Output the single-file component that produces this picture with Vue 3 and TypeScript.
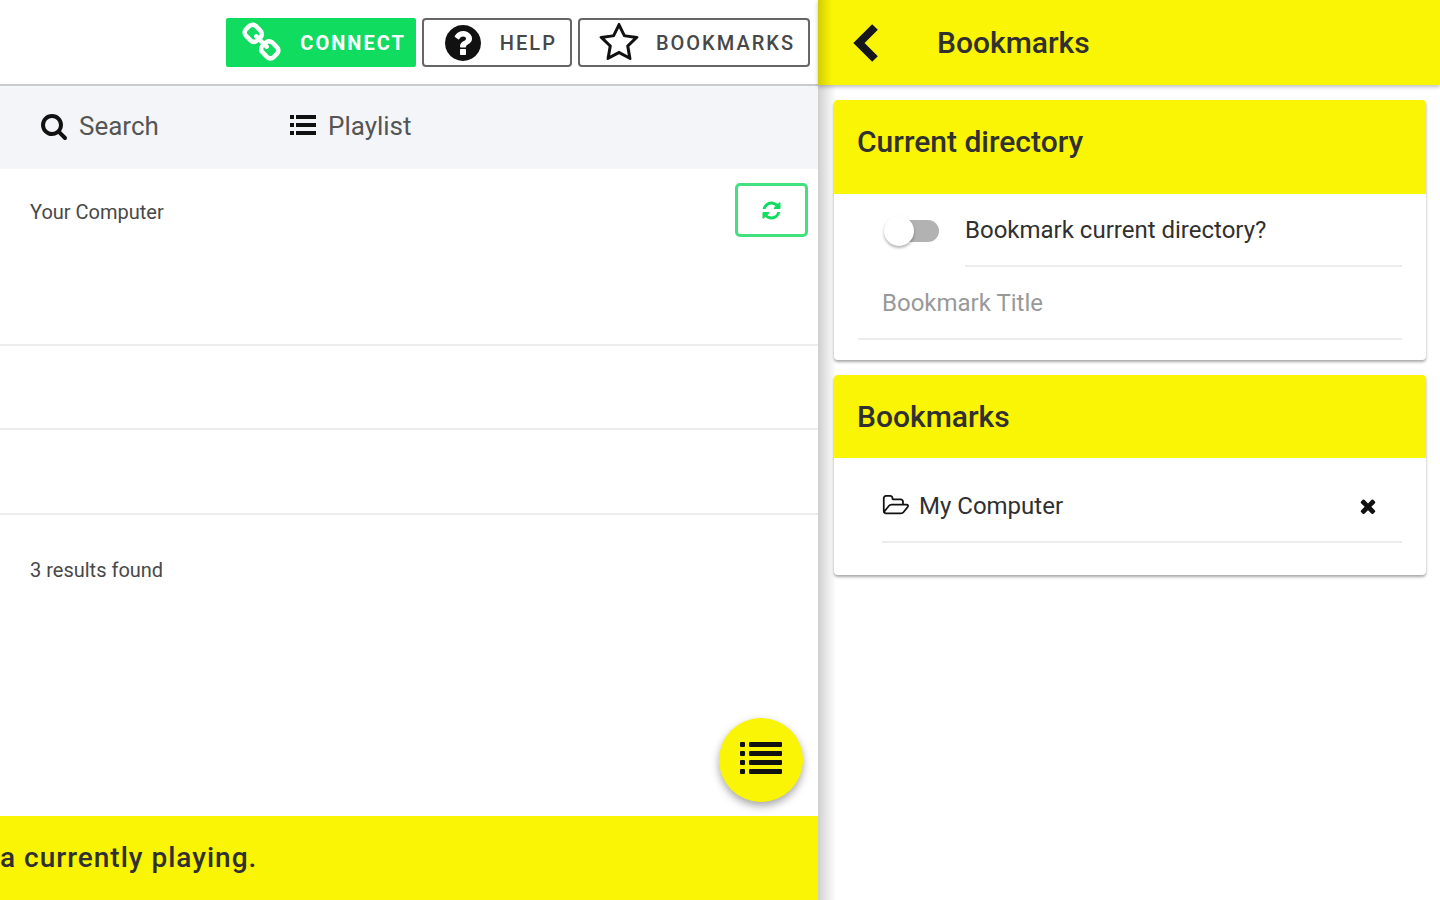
<script setup lang="ts">
import { ref } from 'vue'

const bookmarkCurrent = ref(false)
const bookmarkTitle = ref('')
const bookmarks = ref<string[]>(['My Computer'])
const drives = ['', '']

function removeBookmark(index: number): void {
  bookmarks.value.splice(index, 1)
}
</script>

<template>
  <div class="app">
    <main class="browser">
      <header class="toolbar">
        <button type="button" class="action connect">
          <svg class="icon" viewBox="0 0 1792 1792" aria-hidden="true"><path d="M1456 1216q0-40-28-68l-208-208q-28-28-68-28-42 0-72 32 3 3 19 18.500t21.500 21.500 15 19 13 25.500 3.500 27.500q0 40-28 68t-68 28q-15 0-27.500-3.500t-25.500-13-19-15-21.500-21.500-18.500-19q-33 31-33 73 0 40 28 68l206 207q27 27 68 27 40 0 68-26l147-146q28-28 28-67zm-703-705q0-40-28-68l-206-207q-28-28-68-28-39 0-68 27l-147 146q-28 28-28 67 0 40 28 68l208 208q27 27 68 27 42 0 72-31-3-3-19-18.500t-21.500-21.500-15-19-13-25.500-3.500-27.500q0-40 28-68t68-28q15 0 27.500 3.500t25.500 13 19 15 21.500 21.500 18.500 19q33-31 33-73zm895 705q0 120-85 203l-147 146q-83 83-203 83-121 0-204-85l-206-207q-83-83-83-203 0-123 88-209l-88-88q-86 88-208 88-120 0-204-84l-208-208q-84-84-84-204t85-203l147-146q83-83 203-83 121 0 204 85l206 207q83 83 83 203 0 123-88 209l88 88q86-88 208-88 120 0 204 84l208 208q84 84 84 204z" /></svg>
          <span>Connect</span>
        </button>
        <button type="button" class="action">
          <svg class="icon" viewBox="0 0 1792 1792" aria-hidden="true"><path d="M1024 1376v-192q0-14-9-23t-23-9h-192q-14 0-23 9t-9 23v192q0 14 9 23t23 9h192q14 0 23-9t9-23zm256-672q0-88-55.500-163t-138.500-116-170-41q-243 0-371 213-15 24 8 42l132 100q7 6 19 6 16 0 25-12 53-68 86-92 34-24 86-24 48 0 85.500 26t37.500 59q0 38-20 61t-68 45q-63 28-115.500 86.500t-52.500 125.500v36q0 14 9 23t23 9h192q14 0 23-9t9-23q0-19 21.500-49.500t54.500-49.500q32-18 49-28.500t46-35 44.500-48 28-60.500 12.500-81zm384 192q0 209-103 385.500t-279.500 279.500-385.500 103-385.500-103-279.500-279.500-103-385.500 103-385.500 279.500-279.500 385.500-103 385.500 103 279.500 279.500 103 385.500z" /></svg>
          <span>Help</span>
        </button>
        <button type="button" class="action">
          <svg class="icon" viewBox="0 0 1792 1792" aria-hidden="true"><path d="M1201 1004l306-297-422-62-189-382-189 382-422 62 306 297-73 421 378-199 377 199zm527-357q0 22-26 48l-363 354 86 500q1 7 1 20 0 50-41 50-19 0-40-12l-449-236-449 236q-22 12-40 12-21 0-31.500-14.500t-10.500-35.500q0-6 2-20l86-500-364-354q-25-27-25-48 0-37 56-46l502-73 225-455q19-41 49-41t49 41l225 455 502 73q56 9 56 46z" /></svg>
          <span>Bookmarks</span>
        </button>
      </header>

      <nav class="tabs">
        <a href="#search">
          <svg class="tab-icon" viewBox="0 0 1792 1792" aria-hidden="true"><path d="M1216 832q0-185-131.500-316.500t-316.500-131.500-316.500 131.500-131.500 316.500 131.500 316.500 316.500 131.500 316.500-131.500 131.500-316.500zm512 832q0 52-38 90t-90 38q-54 0-90-38l-343-342q-179 124-399 124-143 0-273.500-55.500t-225-150-150-225-55.500-273.500 55.500-273.500 150-225 225-150 273.500-55.500 273.500 55.500 225 150 150 225 55.500 273.500q0 220-124 399l343 343q37 37 37 90z" /></svg>
          Search
        </a>
        <a href="#playlist">
          <svg class="tab-icon" viewBox="0 0 28 28" aria-hidden="true"><path d="M1 3h4v4h-4zM7 3h20v4h-20zM1 11h4v4h-4zM7 11h20v4h-20zM1 19h4v4h-4zM7 19h20v4h-20z" /></svg>
          Playlist
        </a>
      </nav>

      <section class="listing">
        <div class="location">
          <span>Your Computer</span>
          <button type="button" class="refresh" aria-label="Refresh">
            <svg viewBox="0 0 1792 1792" aria-hidden="true"><path d="M1639 1056q0 5-1 7-64 268-268 434.500t-478 166.500q-146 0-282.500-55t-243.500-157l-129 129q-19 19-45 19t-45-19-19-45v-448q0-26 19-45t45-19h448q26 0 45 19t19 45-19 45l-137 137q71 66 161 102t187 36q134 0 250-65t186-179q11-17 53-117 8-23 30-23h192q13 0 22.500 9.500t9.500 22.500zm25-800v448q0 26-19 45t-45 19h-448q-26 0-45-19t-19-45 19-45l138-138q-148-137-349-137-134 0-250 65t-186 179q-11 17-53 117-8 23-30 23h-199q-13 0-22.500-9.500t-9.500-22.500v-7q65-268 270-434.500t480-166.500q146 0 284 55.500t245 156.500l130-129q19-19 45-19t45 19 19 45z" /></svg>
          </button>
        </div>
        <div v-for="(drive, i) in drives" :key="i" class="row">{{ drive }}</div>
        <p class="results">3 results found</p>
        <button type="button" class="fab" aria-label="Show queue">
          <svg viewBox="0 0 44 36" aria-hidden="true"><path d="M2 1h3v3h-3zM11 1h31v3h-31zM2 10h3v3h-3zM11 10h31v3h-31zM2 19h3v3h-3zM11 19h31v3h-31zM2 28h3v3h-3zM11 28h31v3h-31z" /></svg>
        </button>
      </section>

      <footer class="player">a currently playing.</footer>
    </main>

    <aside class="panel">
      <header class="panel-bar">
        <button type="button" class="back" aria-label="Back">
          <svg viewBox="0 0 28 38" aria-hidden="true"><path d="M22 3L6 19l16 16" /></svg>
        </button>
        <h1>Bookmarks</h1>
      </header>

      <section class="card">
        <h2 class="tall">Current directory</h2>
        <div class="toggle-row">
          <input id="bookmark-current" v-model="bookmarkCurrent" type="checkbox" role="switch" />
          <label for="bookmark-current">Bookmark current directory?</label>
        </div>
        <input v-model="bookmarkTitle" class="title-input" type="text" placeholder="Bookmark Title" aria-label="Bookmark Title" />
      </section>

      <section class="card">
        <h2>Bookmarks</h2>
        <ul>
          <li v-for="(name, i) in bookmarks" :key="name">
            <a href="#bookmark">
              <svg viewBox="0 0 2048 1792" aria-hidden="true"><path d="M1845 931q0-35-53-35h-1088q-40 0-85.500 21.500t-71.500 52.500l-294 363q-18 24-18 40 0 35 53 35h1088q40 0 86-22t71-53l294-363q18-22 18-39zm-1141-163h768v-160q0-40-28-68t-68-28h-576q-40 0-68-28t-28-68v-64q0-40-28-68t-68-28h-320q-40 0-68 28t-28 68v853l256-315q44-53 116-87.500t140-34.500zm1269 163q0 62-46 120l-295 363q-43 53-116 87.500t-140 34.500h-1088q-92 0-158-66t-66-158v-960q0-92 66-158t158-66h320q92 0 158 66t66 158v32h544q92 0 158 66t66 158v160h192q54 0 99 24.500t67 70.500q15 32 15 68z" /></svg>
              {{ name }}
            </a>
            <button type="button" class="remove" aria-label="Remove bookmark" @click="removeBookmark(i)">
              <svg viewBox="0 0 1792 1792" aria-hidden="true"><path d="M1490 1322q0 40-28 68l-136 136q-28 28-68 28t-68-28l-294-294-294 294q-28 28-68 28t-68-28l-136-136q-28-28-28-68t28-68l294-294-294-294q-28-28-28-68t28-68l136-136q28-28 68-28t68 28l294 294 294-294q28-28 68-28t68 28l136 136q28 28 28 68t-28 68l-294 294 294 294q28 28 28 68z" /></svg>
            </button>
          </li>
        </ul>
      </section>
    </aside>
  </div>
</template>

<style>
body {
  margin: 0;
  background: #fff;
}
</style>

<style scoped>
.app {
  display: grid;
  grid-template-columns: 818fr 622fr;
  min-height: 100vh;
  font-family: Roboto, "Liberation Sans", sans-serif;
  color: #303030;
}

.app *,
.app {
  box-sizing: border-box;
}

button {
  padding: 0;
  border: 0;
  background: none;
  font: inherit;
  color: inherit;
  cursor: pointer;
}

a {
  color: inherit;
  text-decoration: none;
}

svg {
  flex: none;
  fill: #111;
}

.browser {
  display: flex;
  flex-direction: column;
  min-width: 0;
}

.toolbar {
  display: flex;
  align-items: center;
  justify-content: flex-end;
  gap: 6px;
  height: 86px;
  padding: 1px 8px 0 0;
  border-bottom: 2px solid #c9cbce;
}

.action {
  display: flex;
  align-items: center;
  gap: 16px;
  height: 49px;
  padding: 0 13px 0 18px;
  border: 2px solid #666;
  border-radius: 4px;
  font-size: 20px;
  font-weight: 500;
  letter-spacing: 2px;
  text-transform: uppercase;
  color: #484848;
}

.icon {
  width: 42px;
  height: 42px;
}

.connect {
  padding: 0 10px 0 16px;
  border: 0;
  border-radius: 2px;
  background: #10dc60;
  font-weight: 700;
  color: #fff;
}

.connect .icon {
  fill: #fff;
}

.tabs {
  display: grid;
  grid-template-columns: 249px 1fr;
  align-items: center;
  height: 83px;
  padding: 0 0 3px 40px;
  background: #f4f5f9;
  font-size: 26px;
  color: #555;
}

.tabs a {
  display: flex;
  align-items: center;
  gap: 11px;
}

.tab-icon {
  width: 28px;
  height: 28px;
}

.listing {
  position: relative;
  flex: 1;
  font-size: 20px;
  color: #484848;
}

.location {
  display: flex;
  align-items: flex-start;
  justify-content: space-between;
  height: 177px;
  padding: 14px 10px 0 30px;
  border-bottom: 2px solid #ececec;
}

.location span {
  line-height: 58px;
}

.refresh {
  display: flex;
  align-items: center;
  justify-content: center;
  width: 73px;
  height: 54px;
  border: 3px solid #43e07f;
  border-radius: 5px;
}

.refresh svg {
  width: 21px;
  height: 21px;
  fill: #10dc60;
}

.row {
  height: 84px;
  border-bottom: 2px solid #ececec;
}

.row + .row {
  height: 85px;
}

.results {
  margin: 0;
  padding: 40px 30px;
  line-height: 30px;
}

.fab {
  position: absolute;
  right: 15px;
  bottom: 14px;
  display: flex;
  align-items: center;
  justify-content: center;
  width: 84px;
  height: 84px;
  border-radius: 50%;
  background: #faf405;
  box-shadow: 0 4px 8px rgba(0, 0, 0, 0.35);
}

.fab svg {
  width: 44px;
  height: 36px;
  stroke: #111;
  stroke-width: 2px;
  stroke-linejoin: round;
}

.player {
  height: 84px;
  background: #faf405;
  font-size: 28px;
  font-weight: 500;
  line-height: 84px;
  letter-spacing: 1px;
}

.panel {
  position: relative;
  min-width: 0;
  background: linear-gradient(90deg, #cfcfcf, #e6e6e6 8px, #fff 18px);
}

.panel-bar {
  display: flex;
  align-items: center;
  gap: 56px;
  height: 85px;
  padding-left: 35px;
  background: linear-gradient(90deg, #d2cd04, #faf405 14px);
  box-shadow: 0 2px 4px rgba(0, 0, 0, 0.25);
}

.back svg {
  display: block;
  width: 28px;
  height: 38px;
  fill: none;
  stroke: #16161c;
  stroke-width: 8px;
}

h1,
h2 {
  margin: 0;
  font-size: 30px;
  font-weight: 500;
}

.card {
  margin: 15px 14px 0 16px;
  border-radius: 4px;
  overflow: hidden;
  background: #fff;
  box-shadow: 0 2px 3px rgba(0, 0, 0, 0.35);
}

h2 {
  height: 83px;
  padding: 0 23px;
  line-height: 83px;
  background: #faf405;
}

h2.tall {
  height: 94px;
}

.toggle-row {
  display: flex;
  align-items: center;
  gap: 26px;
  height: 73px;
  padding: 0 24px 0 50px;
  font-size: 24px;
}

.toggle-row input {
  appearance: none;
  display: flex;
  align-items: center;
  flex: none;
  width: 55px;
  height: 22px;
  margin: 0;
  background: linear-gradient(90deg, transparent 14px, #b2b2b2 14px);
  border-radius: 11px;
}

.toggle-row input::before {
  content: "";
  width: 30px;
  height: 30px;
  border-radius: 50%;
  background: #fff;
  box-shadow: 0 2px 3px rgba(0, 0, 0, 0.3);
}

.toggle-row input:checked {
  justify-content: flex-end;
}

.toggle-row label {
  flex: 1;
  height: 73px;
  border-bottom: 2px solid #ececec;
  line-height: 73px;
}

.title-input {
  display: block;
  width: calc(100% - 48px);
  height: 73px;
  margin: 0 24px 20px;
  padding: 0 24px;
  border: 0;
  border-bottom: 2px solid #ececec;
  background: none;
  font-family: inherit;
  font-size: 24px;
  color: #303030;
}

.title-input::placeholder {
  color: #999;
  opacity: 1;
}

ul {
  margin: 0;
  padding: 0 24px 32px 48px;
  list-style: none;
  font-size: 24px;
}

li {
  display: flex;
  align-items: center;
  justify-content: space-between;
  height: 85px;
  padding: 12px 23px 0 0;
  border-bottom: 2px solid #ececec;
}

li a {
  display: flex;
  align-items: center;
  gap: 9px;
}

li a svg {
  width: 28px;
  height: 25px;
}

.remove svg {
  display: block;
  width: 22px;
  height: 22px;
}
</style>
